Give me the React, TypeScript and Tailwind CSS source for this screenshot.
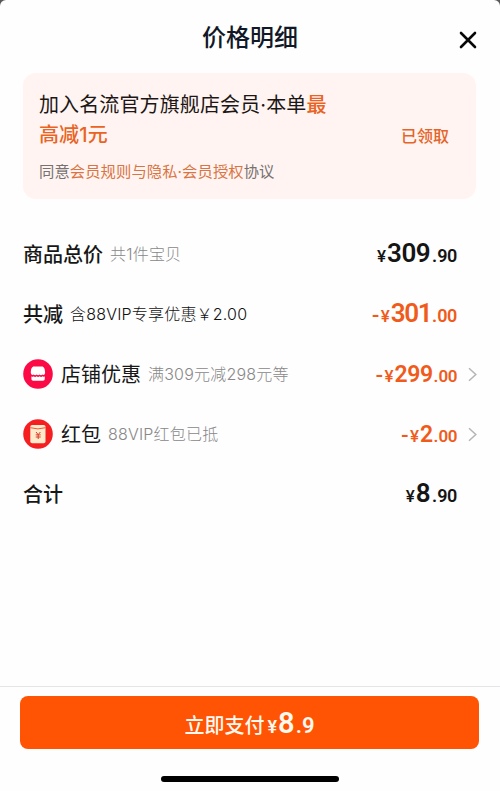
import React from "react";

const StoreIcon = () => (
  <svg className="w-[30px] h-[30px] shrink-0" viewBox="0 0 30 30">
    <circle cx="15" cy="15" r="14.8" fill="#fb0a45" />
    <path d="M11 7.600h7.800c2.200 0 3.300 2.500 3.300 6.200 0 1.800-1.500 2.700-2.600 1.600-.8 1.100-2.200 1.100-2.900 0-.8 1.100-2.200 1.100-3 0-.8 1.100-2.100 1.100-2.900 0-1.100 1.100-2.900.2-2.900-1.600 0-3.700 1.100-6.200 3.200-6.200z" fill="#fff" />
    <path d="M8.400 17.200q1.100 1.200 2.200.1 1.500 1.300 3 0 1.500 1.300 3 0 1.500 1.300 3 0 1 1 2.200-.1v2.600c0 1.200-.7 1.900-1.900 1.900h-9.600c-1.200 0-1.900-.7-1.900-1.900z" fill="#fff" />
  </svg>
);

const RedPacketIcon = () => (
  <svg className="w-[30px] h-[30px] shrink-0" viewBox="0 0 30 30">
    <circle cx="15" cy="15" r="14.8" fill="#f51f22" />
    <rect x="7.300" y="6" width="15.200" height="18.300" rx="1.800" fill="#ffebc9" />
    <path d="M7.300 8.700q7.600 2.400 15.200 0" fill="none" stroke="#f0553f" strokeWidth="1" />
    <path d="M13 13l2.200 2.700 2.200-2.700M12.700 15.900h5M12.700 18h5M15.200 15.700v4.300" fill="none" stroke="#d93a2c" strokeWidth="1" />
  </svg>
);

const Chevron = () => (
  <svg className="w-[9px] h-[15px]" viewBox="0 0 9 15" fill="none" stroke="#b5b5b5" strokeWidth="1.500">
    <path d="M1 1.300l6.800 6.200L1 13.700" />
  </svg>
);

interface PriceProps {
  minus?: boolean;
  whole: string;
  cents: string;
  small?: boolean;
  wholeClass?: string;
}

const Price: React.FC<PriceProps> = ({ minus, whole, cents, small, wholeClass = "tracking-[-0.5px]" }) => (
  <div className={`flex items-baseline font-[Roboto,'Noto_Sans_CJK_SC',sans-serif] font-semibold leading-none ${small ? "" : "pb-[3px]"} ${minus ? "text-[#f05a1a]" : "text-[#151515]"}`}>
    {minus && <span className="text-[21px] w-[9px]">-</span>}
    <span className="text-[17px] w-[10px] font-medium">¥</span>
    <span className={`${small ? "text-[23px]" : "text-[26px]"} ${wholeClass}`}>{whole}</span>
    <span className={small ? "text-[17px] ml-[1px]" : "text-[18px] ml-[2px]"}>.</span>
    <span className={`tracking-[-0.4px] ${small ? "text-[17px]" : "text-[18px]"}`}>{cents}</span>
  </div>
);

interface RowProps {
  icon?: React.ReactNode;
  label: string;
  note?: string;
  darkNote?: boolean;
  price: React.ReactNode;
  arrow?: boolean;
}

const Row: React.FC<RowProps> = ({ icon, label, note, darkNote, price, arrow }) => (
  <div className="h-[60px] flex items-center pl-[23px] pr-[23px]">
    {icon}
    <span className={`text-[20px] text-[#171717] pt-[2px] ${icon ? "ml-2" : "font-medium"}`}>{label}</span>
    {note && <span className={`ml-[7px] text-[16px] font-light tracking-[0.2px] ${darkNote ? "text-[#111]" : "text-[#888]"}`}>{note}</span>}
    <div className="ml-auto">{price}</div>
    <div className="w-5 flex justify-end">{arrow && <Chevron />}</div>
  </div>
);

export default function App() {
  return (
    <div className="w-full h-[791px] bg-[#595959]">
      <div className="h-full flex flex-col bg-[#fefefe] rounded-t-[6px] overflow-hidden font-[Inter,'Noto_Sans_CJK_SC',sans-serif]">
        <header className="h-[73px] flex items-center justify-between px-[23px] shrink-0">
          <div className="w-[18px]" />
          <h1 className="text-[24px] leading-[36px] pt-[2px] font-medium text-[#111827]">价格明细</h1>
          <button className="w-[18px] mt-[7px]" aria-label="关闭">
            <svg className="w-[18px] h-[18px]" viewBox="0 0 18 18" fill="none" stroke="#080808" strokeWidth="2.600" strokeLinecap="round">
              <path d="M2 2l14 14M16 2L2 16" />
            </svg>
          </button>
        </header>

        <section className="mx-[23px] mr-6 h-[126px] shrink-0 rounded-[13px] bg-[#fff4f1] pl-4 pr-[27px] pt-[17px] flex justify-between">
          <div>
            <p className="text-[20px] leading-[30px] tracking-[0.12px] text-[#1c1716] whitespace-nowrap">
              加入名流官方旗舰店会员·本单<span className="text-[#e96424] font-medium">最</span>
              <br />
              <span className="text-[#e96424] font-medium">高减1元</span>
            </p>
            <p className="mt-[10px] text-[15.300px] leading-[24px] tracking-[0.1px] text-[#777170] whitespace-nowrap">
              同意<span className="text-[#d97445]">会员规则与隐私·会员授权</span>协议
            </p>
          </div>
          <span className="mt-[34px] text-[16px] leading-[24px] font-medium text-[#e56429]">已领取</span>
        </section>

        <main className="pt-[25px] flex-1">
          <Row label="商品总价" note="共1件宝贝" price={<Price whole="309" cents="90" />} />
          <Row label="共减" note="含88VIP专享优惠￥2.00" darkNote price={<Price minus whole="301" cents="00" wholeClass="tracking-[-1.400px] mr-[-1px]" />} />
          <Row icon={<StoreIcon />} label="店铺优惠" note="满309元减298元等" price={<Price minus small whole="299" cents="00" />} arrow />
          <Row icon={<RedPacketIcon />} label="红包" note="88VIP红包已抵" price={<Price minus small whole="2" cents="00" />} arrow />
          <Row label="合计" price={<Price whole="8" cents="90" />} />
        </main>

        <footer className="h-[105px] shrink-0 border-t border-[#e5e5e7] pt-[9px] flex flex-col items-center">
          <button className="w-[459px] h-[53px] mr-px rounded-lg bg-[#ff5403] text-[#fff9ef] flex items-baseline justify-center pt-[12px] font-medium">
            <span className="text-[20px] leading-[30px]">立即支付</span>
            <span className="ml-[3px] font-[Roboto,sans-serif] text-[18px] font-semibold">¥</span>
            <span className="ml-[1px] font-[Roboto,sans-serif] text-[29px] leading-[30px] font-semibold">8</span>
            <span className="ml-px font-[Roboto,sans-serif] text-[22px] leading-[30px] font-semibold">.9</span>
          </button>
          <div className="mt-[27px] w-[178px] h-[6px] rounded-full bg-black" />
        </footer>
      </div>
    </div>
  );
}
